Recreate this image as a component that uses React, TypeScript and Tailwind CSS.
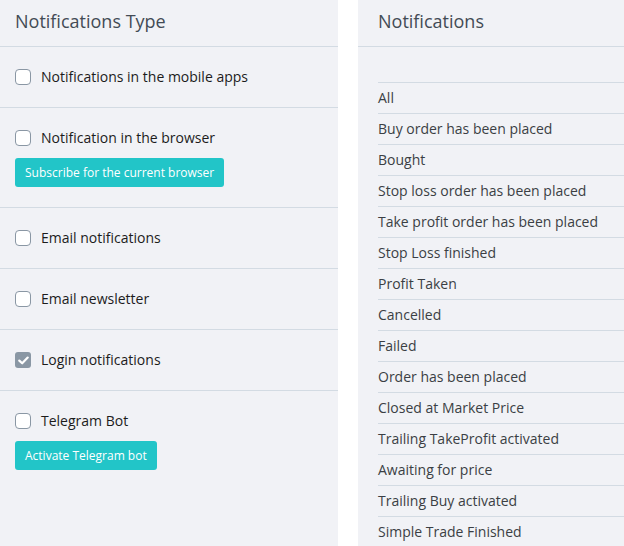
import React from "react";

const Box = ({ checked }: { checked?: boolean }) =>
  checked ? (
    <span className="w-[16px] h-[16px] rounded-[3px] bg-[#8a97a4] flex items-center justify-center shrink-0">
      <svg width="11" height="9" viewBox="0 0 11 9" fill="none">
        <path d="M1.3 4.6 L4.2 7.3 L9.7 1.6" stroke="white" strokeWidth="2.2" strokeLinecap="round" strokeLinejoin="round" />
      </svg>
    </span>
  ) : (
    <span className="w-[16px] h-[16px] rounded-[4px] border-[1.5px] border-[#8a97a4] bg-white shrink-0" />
  );

const Row = ({ label, checked, button }: { label: string; checked?: boolean; button?: string }) => (
  <div className="px-[15px] py-[20px] border-b border-[#d3dbe3]">
    <div className="flex items-center gap-[10px] h-[20px]">
      <Box checked={checked} />
      <span className="text-[14px] text-[#1c1c1c] leading-[20px]">{label}</span>
    </div>
    {button && (
      <button className="mt-[10px] h-[29px] px-[10px] rounded-[3px] bg-[#22c5c8] text-white text-[12px] leading-[29px] block">
        {button}
      </button>
    )}
  </div>
);

const items = [
  "All",
  "Buy order has been placed",
  "Bought",
  "Stop loss order has been placed",
  "Take profit order has been placed",
  "Stop Loss finished",
  "Profit Taken",
  "Cancelled",
  "Failed",
  "Order has been placed",
  "Closed at Market Price",
  "Trailing TakeProfit activated",
  "Awaiting for price",
  "Trailing Buy activated",
  "Simple Trade Finished",
];

export default function App() {
  return (
    <div
      className="w-[624px] h-[546px] bg-white flex gap-[20px] overflow-hidden"
      style={{ fontFamily: '"Open Sans", sans-serif' }}
    >
      <div className="w-[338px] h-full bg-[#f1f2f6] shrink-0">
        <div className="h-[47px] px-[15px] flex items-center border-b border-[#d3dbe3] pb-[4px]">
          <span className="text-[18px] text-[#434b55]">Notifications Type</span>
        </div>
        <Row label="Notifications in the mobile apps" />
        <Row label="Notification in the browser" button="Subscribe for the current browser" />
        <Row label="Email notifications" />
        <Row label="Email newsletter" />
        <Row label="Login notifications" checked />
        <div className="px-[15px] py-[20px]">
          <div className="flex items-center gap-[10px] h-[20px]">
            <Box />
            <span className="text-[14px] text-[#1c1c1c] leading-[20px]">Telegram Bot</span>
          </div>
          <button className="mt-[10px] h-[29px] px-[10px] rounded-[3px] bg-[#22c5c8] text-white text-[12px] leading-[29px] block">
            Activate Telegram bot
          </button>
        </div>
      </div>
      <div className="flex-1 h-full bg-[#f1f2f6] overflow-hidden">
        <div className="h-[47px] px-[20px] flex items-center border-b border-[#d3dbe3] pb-[4px]">
          <span className="text-[18px] text-[#434b55]">Notifications</span>
        </div>
        <div className="h-[35px]" />
        <div className="ml-[20px]">
          {items.map((t) => (
            <div key={t} className="h-[31px] border-t border-[#d3dbe3] flex items-center pb-[2px]">
              <span className="text-[14px] text-[#3b3f44] whitespace-nowrap">{t}</span>
            </div>
          ))}
        </div>
      </div>
    </div>
  );
}
